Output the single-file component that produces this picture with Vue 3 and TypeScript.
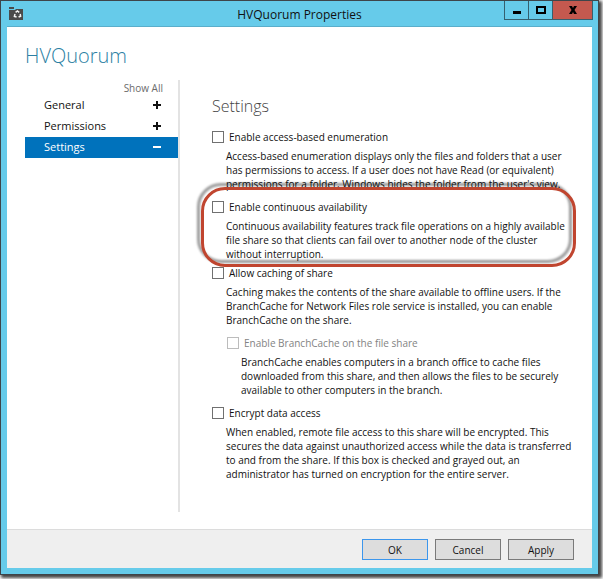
<script setup lang="ts">
import { ref } from 'vue'

interface Option {
  id: string
  label: string
  lines: string[]
  disabled?: boolean
  highlighted?: boolean
}

const sections = ['General', 'Permissions', 'Settings']
const active = ref('Settings')
const checked = ref<string[]>([])

const options: Option[] = [
  {
    id: 'enumeration',
    label: 'Enable access-based enumeration',
    lines: [
      'Access-based enumeration displays only the files and folders that a user',
      'has permissions to access. If a user does not have Read (or equivalent)',
      "permissions for a folder, Windows hides the folder from the user's view.",
    ],
  },
  {
    id: 'availability',
    label: 'Enable continuous availability',
    highlighted: true,
    lines: [
      'Continuous availability features track file operations on a highly available',
      'file share so that clients can fail over to another node of the cluster',
      'without interruption.',
    ],
  },
  {
    id: 'caching',
    label: 'Allow caching of share',
    lines: [
      'Caching makes the contents of the share available to offline users. If the',
      'BranchCache for Network Files role service is installed, you can enable',
      'BranchCache on the share.',
    ],
  },
  {
    id: 'branchcache',
    label: 'Enable BranchCache on the file share',
    disabled: true,
    lines: [
      'BranchCache enables computers in a branch office to cache files',
      'downloaded from this share, and then allows the files to be securely',
      'available to other computers in the branch.',
    ],
  },
  {
    id: 'encrypt',
    label: 'Encrypt data access',
    lines: [
      'When enabled, remote file access to this share will be encrypted. This',
      'secures the data against unauthorized access while the data is transferred',
      'to and from the share. If this box is checked and grayed out, an',
      'administrator has turned on encryption for the entire server.',
    ],
  },
]
</script>

<template>
  <div class="desktop">
    <div class="window">
      <header class="titlebar">
        <svg class="app-icon" viewBox="0 0 14 13" aria-hidden="true">
          <path d="M0 0h5v2H0zM0 3h6l1-1h7v11H0z" fill="#4a4a4a" />
          <path d="M6.600 5.400 8.400 4l1.800 1.400M11.200 7l.4 2.200-2 .8M7.600 10 5.400 9.400 6 7" fill="none" stroke="#f4f4f4" stroke-width="1.500" />
        </svg>
        <h1 class="title">HVQuorum Properties</h1>
        <div class="window-buttons">
          <button type="button" class="minimize" aria-label="Minimize">
            <svg viewBox="0 0 10 8"><path d="M1 5h8v3H1z" /></svg>
          </button>
          <button type="button" class="maximize" aria-label="Maximize">
            <svg viewBox="0 0 10 8"><path d="M1 1h8v6H1z" fill="none" stroke="#000" stroke-width="2" /></svg>
          </button>
          <button type="button" class="close" aria-label="Close">
            <svg viewBox="0 0 10 8"><path d="M1 0h3l1 2 1-2h3L6.500 4 9 8H6L5 6 4 8H1l2.500-4z" /></svg>
          </button>
        </div>
      </header>

      <div class="client">
        <h2 class="share-name">HVQuorum</h2>
        <div class="columns">
          <nav class="sidebar">
            <a class="show-all" href="#">Show All</a>
            <button
              v-for="name in sections"
              :key="name"
              type="button"
              class="nav-item"
              :class="{ active: active === name }"
              @click="active = name"
            >
              <span>{{ name }}</span>
              <svg viewBox="0 0 8 8" aria-hidden="true">
                <path v-if="active === name" d="M0 3h8v2H0z" />
                <path v-else d="M0 3h3V0h2v3h3v2H5v3H3V5H0z" />
              </svg>
            </button>
          </nav>

          <main class="settings">
            <h3>Settings</h3>
            <section
              v-for="option in options"
              :key="option.id"
              class="option"
              :class="{ disabled: option.disabled, highlighted: option.highlighted }"
            >
              <div class="option-head">
                <input :id="option.id" v-model="checked" type="checkbox" :value="option.id" :disabled="option.disabled" />
                <label :for="option.id">{{ option.label }}</label>
              </div>
              <p>{{ option.lines.join('\n') }}</p>
              <div v-if="option.highlighted" class="callout"></div>
            </section>
          </main>
        </div>

        <footer class="actions">
          <button type="button" class="primary">OK</button>
          <button type="button">Cancel</button>
          <button type="button">Apply</button>
        </footer>
      </div>
    </div>
  </div>
</template>

<style>
body {
  margin: 0;
  background: #fff;
}
</style>

<style scoped>
* {
  box-sizing: border-box;
}

.desktop {
  display: flex;
  min-height: 100vh;
  padding: 0 4px 4px 0;
  overflow: hidden;
  font-family: 'Open Sans', 'Noto Sans', sans-serif;
  font-size: 10px;
  line-height: 14px;
  color: #111;
}

h1,
h2,
h3,
p {
  margin: 0;
}

button {
  font: inherit;
  color: inherit;
}

.window {
  flex: 1;
  min-width: 0;
  display: flex;
  flex-direction: column;
  padding: 0 6px 6px;
  border: 1px solid #3e454a;
  background: #66cbea;
  box-shadow: 2px 2px 3px 1px #444;
}

.titlebar {
  display: grid;
  grid-template-columns: 1fr auto 1fr;
  height: 26px;
  border-bottom: 1px solid #5aaecb;
}

.app-icon {
  width: 14px;
  height: 13px;
  margin: 6px 0 0 2px;
}

.title {
  padding-top: 4px;
  font-size: 12px;
  font-weight: 400;
  line-height: 20px;
}

.window-buttons {
  display: flex;
  justify-self: end;
  height: 19px;
  margin-right: -1px;
  border: 1px solid #35606f;
  border-top: 0;
}

.window-buttons button {
  display: grid;
  place-items: center;
  width: 24px;
  padding: 0;
  border: 0;
  border-right: 1px solid #35606f;
  background: transparent;
}

.window-buttons .close {
  width: 39px;
  border-right: 0;
  background: #c4594f;
}

.window-buttons svg {
  width: 10px;
  height: 8px;
}

.client {
  flex: 1;
  display: flex;
  flex-direction: column;
  background: #fff;
}

.share-name {
  padding: 15px 18px 0;
  font-size: 20px;
  font-weight: 300;
  line-height: 28px;
  color: #2c7fa3;
}

.columns {
  flex: 1;
  display: flex;
  margin-top: 10px;
  padding: 0 17px 17px 18px;
}

.sidebar {
  display: flex;
  flex-direction: column;
  flex: none;
  width: 155px;
  border-right: 2px solid #e3e3e3;
}

.show-all {
  align-self: flex-end;
  margin: 1px 15px 0 0;
  color: #6b6b6b;
  text-decoration: none;
}

.nav-item {
  display: flex;
  align-items: center;
  justify-content: space-between;
  height: 21px;
  padding: 0 17px 1px 19px;
  border: 0;
  background: transparent;
  font-size: 11px;
}

.nav-item.active {
  background: #0072bc;
  color: #fff;
}

.nav-item svg {
  width: 8px;
  height: 8px;
  fill: currentColor;
}

.settings {
  flex: 1;
  min-width: 0;
  padding: 14px 0 0 32px;
}

.settings h3 {
  margin-bottom: 12px;
  font-size: 16px;
  font-weight: 300;
  line-height: 24px;
  color: #444;
}

.option {
  position: relative;
  margin-bottom: 9px;
}

.option.highlighted {
  margin-bottom: 5px;
}

.option-head {
  display: flex;
  align-items: center;
  gap: 5px;
  height: 14px;
  margin-bottom: 5px;
}

.option input {
  appearance: none;
  width: 12px;
  height: 12px;
  margin: 0;
  border: 1px solid #707070;
  background: #fff;
}

.option p {
  padding-left: 14px;
  white-space: pre;
}

.option.disabled {
  padding-left: 15px;
}

.option.disabled input {
  border-color: #bcbcbc;
}

.option.disabled label {
  color: #838383;
}

.callout {
  position: absolute;
  top: -13px;
  right: -1px;
  bottom: -6px;
  left: -11px;
  border: 3px solid #c0452f;
  border-radius: 24px;
  filter: drop-shadow(-4px -4px 1px rgba(0, 0, 0, 0.4));
  pointer-events: none;
}

.actions {
  display: flex;
  justify-content: flex-end;
  gap: 7px;
  padding: 9px 18px 8px;
  border-top: 1px solid #dcdcdc;
  background: #efefef;
}

.actions button {
  width: 66px;
  height: 21px;
  padding: 0;
  border: 1px solid #7a7a7a;
  background: #dddddd;
}

.actions .primary {
  border-color: #3c96ec;
}
</style>
